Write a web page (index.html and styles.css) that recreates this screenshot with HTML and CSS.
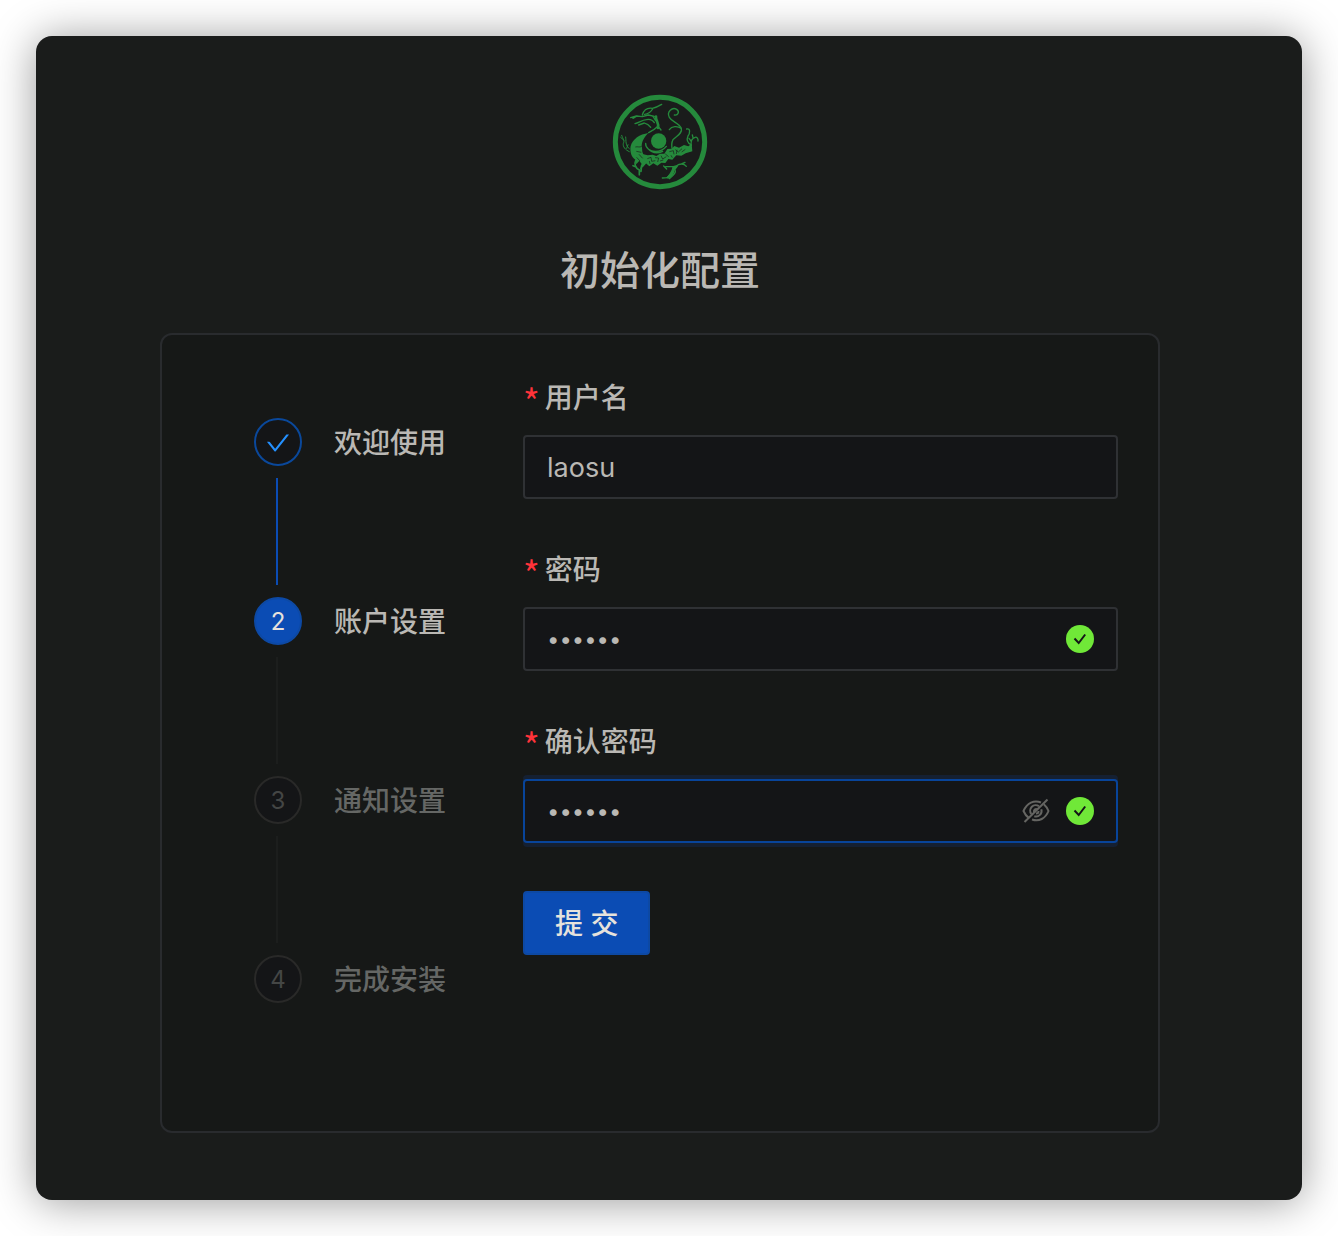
FILE: index.html
```html
<!DOCTYPE html>
<html lang="zh-CN">
<head>
<meta charset="utf-8">
<meta name="viewport" content="width=device-width, initial-scale=1">
<title>初始化配置</title>
<link rel="stylesheet" href="styles.css">
</head>
<body>
<main class="window">
  <svg class="logo" viewBox="21 21 288 288" role="img" aria-label="logo">
    <circle cx="165" cy="165" r="134" fill="none" stroke="#258a3c" stroke-width="15"/>
    <circle cx="161" cy="162" r="23" fill="#258a3c"/>
    <g fill="none" stroke="#258a3c" stroke-linecap="round" stroke-linejoin="round">
      <path stroke-width="4" d="M77 92L94 87L112 89L130 84L148 88M112 84C117 67 128 62 142 64C151 62 160 58 170 52M119 82C130 81 137 75 143 66M96 87L84 94"/>
      <path stroke-width="4" d="M90 110C103 106 112 99 124 98C134 96 143 99 148 107M101 114L118 108L129 113L137 121M144 88L152 101"/>
      <path stroke-width="8" d="M153 89C151 99 163 108 159 123"/>
      <path stroke-width="4" d="M157 119C150 126 141 132 131 137M160 119L168 129"/>
      <path stroke-width="4" d="M193 91C184 75 202 59 215 67C225 74 219 86 208 84M193 91C200 104 222 108 229 124C233 140 214 147 204 158C200 166 199 176 202 187"/>
      <path stroke-width="4" d="M193 128C200 117 218 116 228 124M245 126C257 123 255 139 249 147C244 158 248 168 259 174M259 176C257 164 260 154 270 151C276 149 280 155 279 162M264 152L262 144M252 154L258 162"/>
      <path stroke-width="3" d="M50 145C53 155 60 160 55 169C53 179 60 188 73 194M62 150C64 162 60 175 73 185M69 173L65 184M47 151L57 160"/>
      <path stroke-width="4" d="M122 169C121 184 136 193 151 193C163 193 177 187 184 178M128 184C144 202 162 198 173 193"/>
      <path stroke-width="5" d="M92 221C87 231 91 243 103 249L103 263M110 235L108 253M124 225L112 238M92 239L84 236"/>
      <path stroke-width="4" d="M182 239C197 238 211 242 220 233C231 229 238 230 244 238M204 241C202 255 194 263 187 272L172 273M217 237L209 248C215 255 207 264 193 275M185 246L176 237M226 232L240 226"/>
    </g>
    <path fill="#258a3c" d="M204 240L217 238L208 251C208 262 199 270 190 275L182 272C193 264 203 254 204 240Z"/>
    <path fill="#258a3c" d="M130 138C104 142 83 156 77 177C74 194 79 210 91 218L94 232L103 221L110 231L104 249L121 231L126 215L117 207L112 194L111 182C108 170 114 154 130 138Z"/>
    <path fill="#258a3c" d="M112 201L128 205L143 203L154 207L165 200L178 200L187 186L200 185L208 177L222 182L237 174L250 178L260 170L262 193L242 199L229 206L214 205L202 218L190 216L181 228L169 227L157 236L145 229L133 238L122 228Z"/>
    <g fill="none" stroke="#1a1c1b" stroke-width="2">
      <path d="M91 180C98 178 104 182 110 178M94 193L109 196M102 202L113 214M95 211L105 222"/>
      <path d="M127 215L138 211L140 223L151 221M150 212L161 213L158 225M168 206L173 216L184 209M181 201L191 209M193 194L205 191L207 202M211 188L220 195L231 185M230 195L241 187M175 219L165 222M198 205L202 212M133 222L135 231M216 188L214 201"/>
    </g>
  </svg>
  <h1 class="title">初始化配置</h1>

  <div class="card">
    <ol class="steps">
      <li class="step step-done">
        <span class="step-icon">
          <svg class="step-check" viewBox="64 64 896 896" aria-hidden="true"><path fill="currentColor" d="M912 190h-69.900c-9.800 0-19.100 4.500-25.100 12.200L404.700 724.500 207 474a32 32 0 0 0-25.100-12.200H112c-6.700 0-10.400 7.700-6.300 12.900l273.900 347c12.800 16.200 37.400 16.200 50.300 0l488.400-618.900c4.100-5.100.4-12.800-6.300-12.800z"/></svg>
        </span>
        <span class="step-title">欢迎使用</span>
      </li>
      <li class="step step-active" aria-current="step"><span class="step-icon">2</span><span class="step-title">账户设置</span></li>
      <li class="step"><span class="step-icon">3</span><span class="step-title">通知设置</span></li>
      <li class="step"><span class="step-icon">4</span><span class="step-title">完成安装</span></li>
    </ol>

    <form class="form">
      <div class="field">
        <label class="label" for="username"><span class="required">*</span>用户名</label>
        <div class="control"><input class="input" id="username" type="text" value="laosu" required></div>
      </div>
      <div class="field">
        <label class="label" for="password"><span class="required">*</span>密码</label>
        <div class="control">
          <input class="input input-password" id="password" type="password" value="laosu1" required>
          <svg class="icon-valid" viewBox="0 0 28 28" aria-hidden="true"><circle cx="14" cy="14" r="14" fill="#70e838"/><path d="M8.500 13.500L12.700 18L19.200 9.500" fill="none" stroke="#141517" stroke-width="2"/></svg>
        </div>
      </div>
      <div class="field">
        <label class="label" for="confirm"><span class="required">*</span>确认密码</label>
        <div class="control control-focused">
          <input class="input input-password" id="confirm" type="password" value="laosu1" required>
          <button class="reveal" type="button" aria-label="显示密码">
            <svg class="icon-eye" viewBox="0 0 28 28" aria-hidden="true"><g fill="none" stroke="currentColor" stroke-width="2"><path d="M19 5.500C12 2.500 5 6 1.500 14C3 17.500 4.800 19.700 7 21.200M10 22.500C17 25 23.500 21.500 26.500 14C25.300 11 23.700 8.800 21.800 7.200"/><path d="M17 9.300A5.500 5.500 0 0 0 9.300 17M12.300 19.200A5.500 5.500 0 0 0 19.300 12.300"/><path d="M14.800 12A2.500 2.500 0 0 0 12 15M14 16.500A2.500 2.500 0 0 0 16.500 14"/><path d="M2.500 25L25.500 2.500"/></g></svg>
          </button>
          <svg class="icon-valid" viewBox="0 0 28 28" aria-hidden="true"><circle cx="14" cy="14" r="14" fill="#70e838"/><path d="M8.500 13.500L12.700 18L19.200 9.500" fill="none" stroke="#141517" stroke-width="2"/></svg>
        </div>
      </div>
      <button class="submit" type="submit">提 交</button>
    </form>
  </div>
</main>
</body>
</html>
```
FILE: styles.css
```css
* {
  box-sizing: border-box;
}

body {
  margin: 0;
  padding: 36px;
  background: #fff;
  color: #bab8b4;
  font-family: Inter, "Noto Sans CJK SC", sans-serif;
  font-size: 28px;
  font-weight: 500;
  line-height: 46px;
}

.window {
  display: flex;
  flex-direction: column;
  align-items: center;
  padding: 58px 142px 67px 124px;
  border-radius: 16px;
  background: #1a1c1b;
  box-shadow: 0 2px 44px rgba(0, 0, 0, 0.4);
}

.logo {
  width: 96px;
  height: 96px;
}

.title {
  margin: 48px 0 29px;
  font-size: 40px;
  font-weight: 500;
  line-height: 66px;
}

.card {
  display: flex;
  width: 100%;
  min-height: 800px;
  padding: 40px;
  border: 2px solid #292b2e;
  border-radius: 12px;
  background: #161817;
}

.steps {
  flex: 0 0 321px;
  margin: 0;
  padding: 43px 0 0 52px;
  list-style: none;
}

.step {
  display: grid;
  grid-template-columns: 48px auto;
  column-gap: 32px;
  align-content: start;
  height: 179px;
  color: #656765;
}

.step:last-child {
  height: 48px;
}

.step-done,
.step-active {
  color: #bab8b4;
}

.step:not(:last-child)::after {
  content: "";
  width: 2px;
  height: 107px;
  margin: 12px 0 0 22px;
  background: #1c1e1d;
}

.step-done:not(:last-child)::after {
  background: #0b4cb4;
}

.step-icon {
  display: flex;
  align-items: center;
  justify-content: center;
  height: 48px;
  padding-top: 2px;
  border: 2px solid #292928;
  border-radius: 50%;
  background: #141517;
  color: #444645;
  font-size: 24px;
  font-weight: 400;
}

.step-title {
  height: 48px;
  line-height: 50px;
}

.step-done .step-icon {
  border-color: #0a489b;
  color: #2490ff;
}

.step-active .step-icon {
  border-color: #0d49a4;
  background: #0b4cb4;
  color: #e6e2dc;
}

.step-check {
  width: 24px;
  height: 24px;
}

.form {
  flex: 1;
  min-width: 0;
}

.field {
  margin-bottom: 48px;
}

.label {
  display: flex;
  gap: 5px;
  height: 60px;
}

.required {
  color: #ff333a;
  font-family: "Noto Sans CJK SC", sans-serif;
  font-size: 36px;
  font-weight: 400;
  line-height: 50px;
}

.control {
  display: flex;
  align-items: center;
  gap: 16px;
  height: 64px;
  padding: 0 22px;
  border: 2px solid #2f3134;
  border-radius: 4px;
  background: #141517;
}

.control-focused {
  border-color: #08449a;
  box-shadow: 0 4px #152032, 0 -4px #152032;
}

.input {
  flex: 1;
  min-width: 0;
  padding: 0;
  border: 0;
  outline: 0;
  background: transparent;
  color: inherit;
  font-family: inherit;
  font-size: 27px;
  font-weight: 400;
}

.input-password {
  font-size: 22px;
}

.reveal {
  display: flex;
  padding: 0;
  border: 0;
  background: transparent;
  color: #656562;
}

.icon-valid,
.icon-eye {
  width: 28px;
  height: 28px;
}

.submit {
  height: 64px;
  padding: 2px 30px 0;
  border: 2px solid #0d49a4;
  border-radius: 4px;
  background: #0b4cb4;
  color: #e6e2dc;
  font: inherit;
}
```
